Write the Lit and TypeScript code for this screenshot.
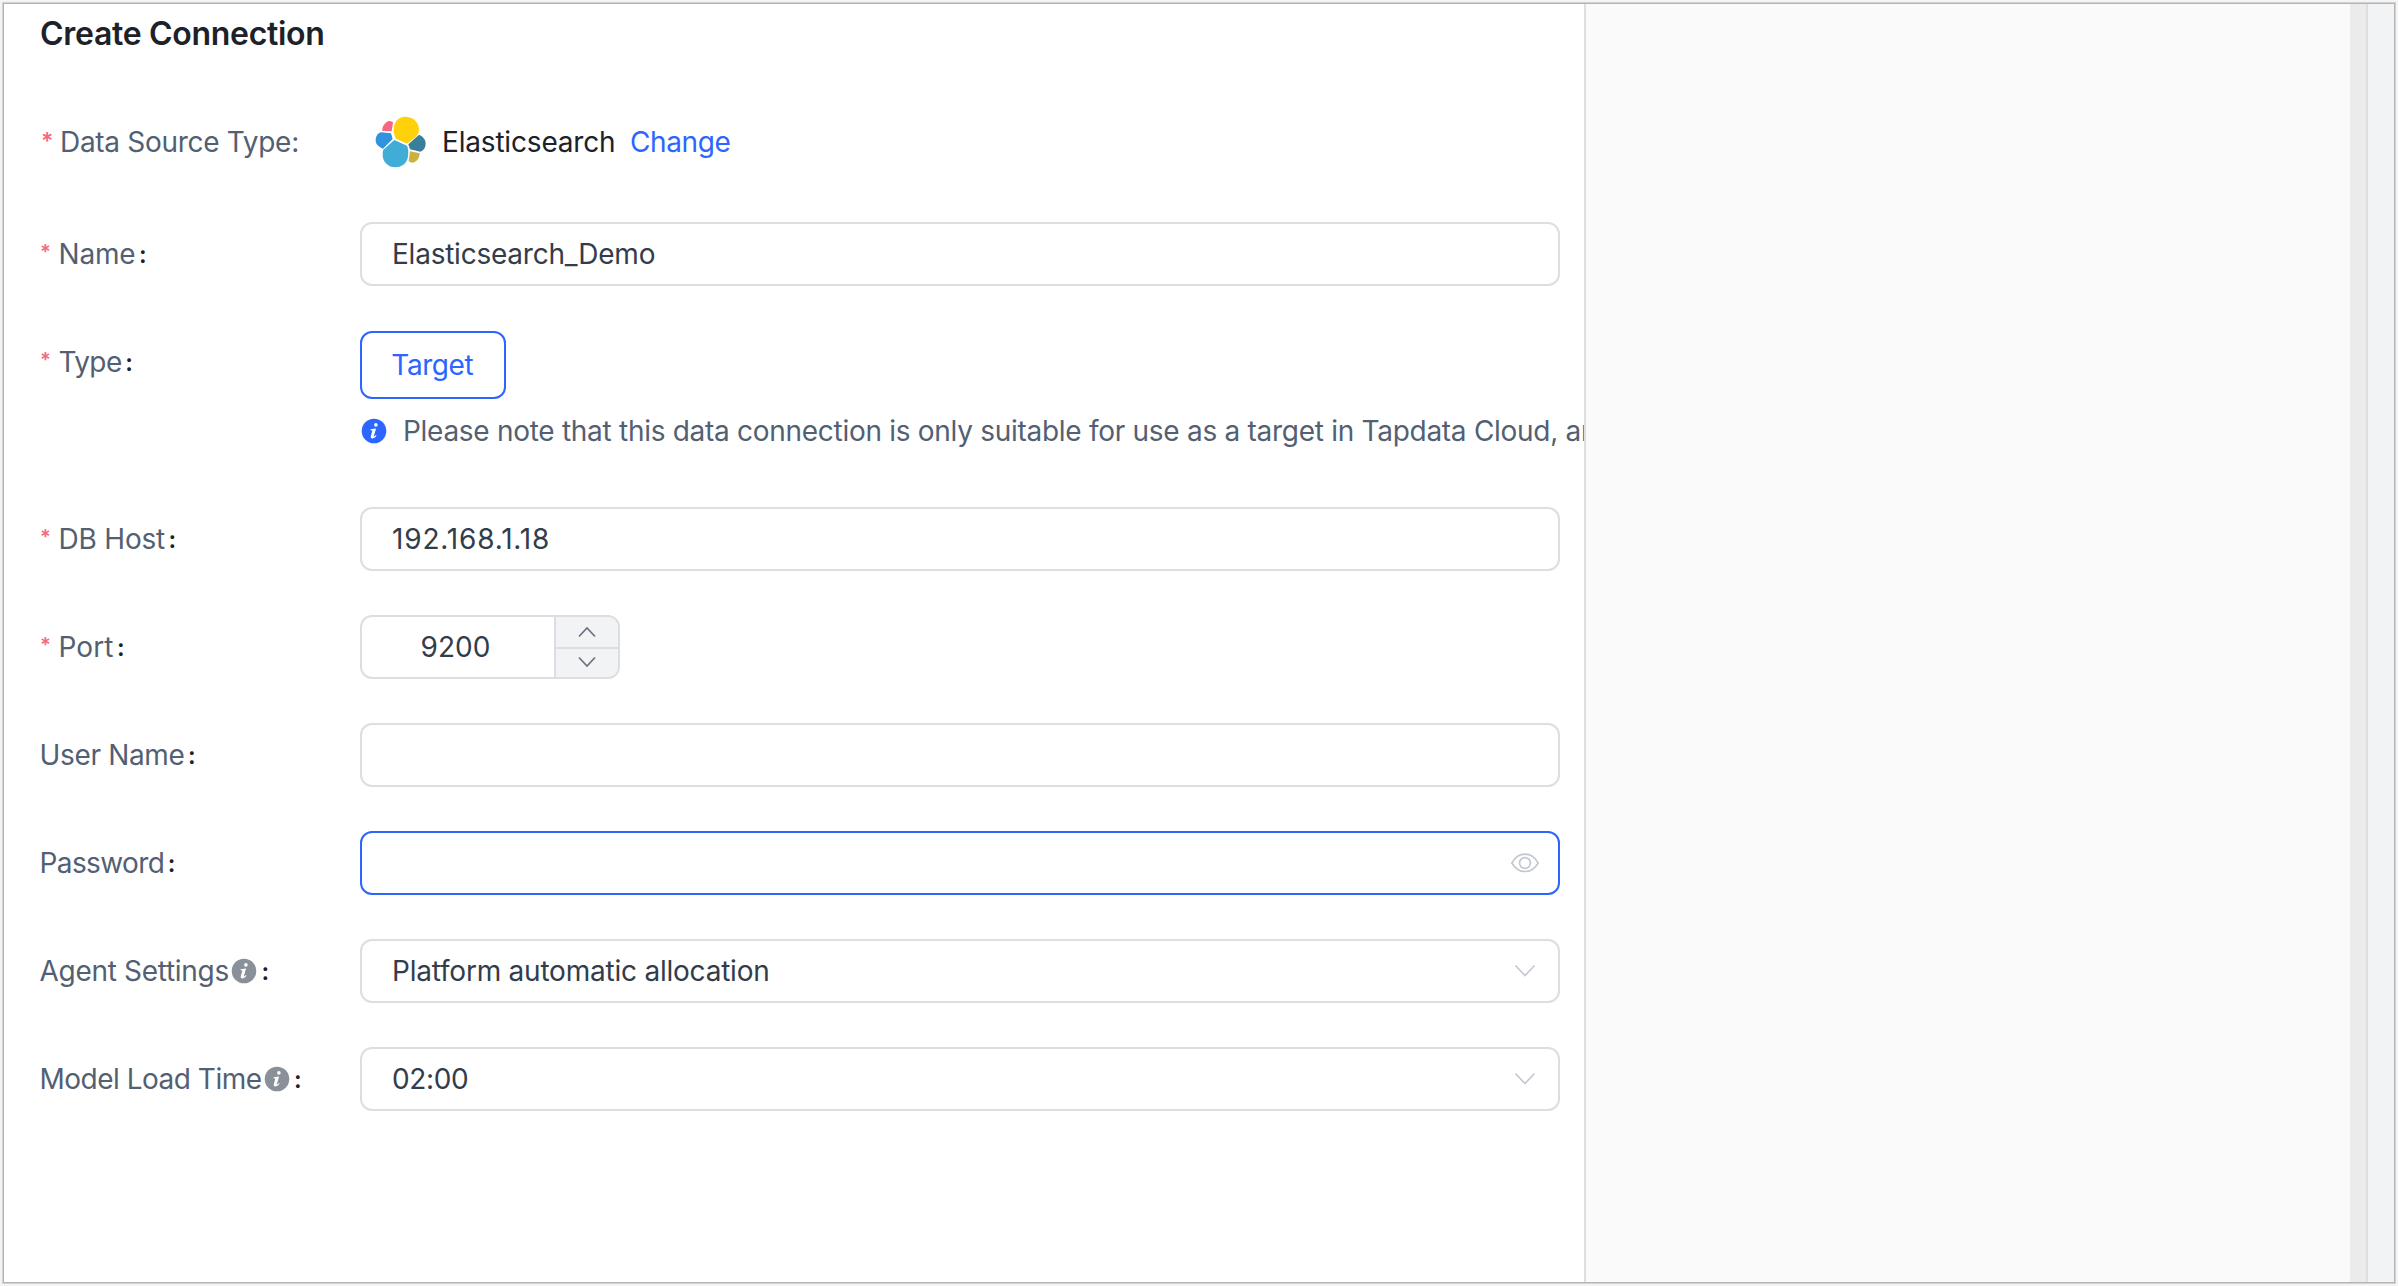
import { LitElement, html, css, svg, nothing } from "lit";
import { customElement, property } from "lit/decorators.js";
import { styleMap } from "lit/directives/style-map.js";

const track = (px: number) => styleMap({ letterSpacing: `${px}px` });

const infoIcon = svg`<svg class="info" viewBox="0 0 26 26">
  <circle cx="13" cy="13" r="12.3" fill="currentColor" />
  <circle cx="14.9" cy="6.9" r="1.8" fill="#fff" />
  <path d="M9.6 11.3L15.1 10.4L12.8 18.3C12.6 19.1 13.2 19 14.8 17.1L15.5 17.7C13.4 20.9 9.3 21.5 9.7 18.5L11.4 12.4L9.5 12.2Z" fill="#fff" />
</svg>`;

const chevronDown = svg`<svg class="chevron" viewBox="0 0 28 28">
  <path d="M4.5 8.5L14 18.5L23.5 8.5" fill="none" stroke="#c3c7d3" stroke-width="1.6" />
</svg>`;

const eyeIcon = svg`<svg class="eye" viewBox="0 0 28 20">
  <path d="M0.8 10C7.5 -1.8 20.5 -1.8 27.2 10C20.5 21.4 7.5 21.4 0.8 10Z" fill="none" stroke="#c3c7d3" stroke-width="1.6" />
  <circle cx="14" cy="10" r="5.4" fill="none" stroke="#c3c7d3" stroke-width="1.6" />
</svg>`;

const elasticLogo = svg`<svg class="logo" viewBox="46 48 153 156">
  <path d="M105 73C112 54 128 49 143 51C163 53 178 70 178 88C178 97 175 104 169 110L142 131L109 116C102 104 100 87 105 73Z" fill="#fed10a" />
  <path d="M71 149L104 120L142 137C147 147 147 160 144 175C138 194 124 202 107 202C86 202 69 186 69 165C69 159 69 154 71 149Z" fill="#40add6" />
  <path d="M68 93C67 80 74 69 87 63C91 62 96 64 100 67L96 94Z" fill="#f7677f" />
  <path d="M65 97L94 100L99 117L70 146C55 141 48 131 48 121C48 109 54 99 65 97Z" fill="#2f93e0" />
  <path d="M178 104C190 109 198 119 198 131C198 142 192 151 182 155L151 148L146 133Z" fill="#3b7e9c" />
  <path d="M151 154L180 160C180 173 172 186 159 188C154 188 150 186 147 183Z" fill="#cdb13f" />
</svg>`;

@customElement("form-row")
class FormRow extends LitElement {
  @property() label = "";
  @property({ type: Boolean }) required = false;
  @property({ type: Boolean }) tip = false;
  @property({ type: Number }) track = 0;

  static styles = css`
    :host {
      display: grid;
      grid-template-columns: 320px 1200px;
      align-items: start;
      margin-bottom: 44px;
    }
    .label {
      display: flex;
      align-items: center;
      height: 64px;
      color: #535f72;
      white-space: nowrap;
    }
    .star {
      width: 18.5px;
      height: 36px;
      box-sizing: border-box;
      font-size: 20px;
      font-weight: 600;
      line-height: 32px;
      color: #f7677f;
    }
    .text {
      margin-left: -0.5px;
    }
    .required .text {
      margin-left: 0;
    }
    .info {
      width: 26px;
      height: 26px;
      color: #8a9099;
      margin-left: 2px;
      margin-top: -1px;
    }
    .colon {
      margin-left: 3.5px;
      font-size: 24px;
      font-weight: 600;
      color: #1d2129;
      line-height: 28px;
      padding-top: 1px;
    }
    .info + .colon {
      margin-left: 4.5px;
    }
  `;

  render() {
    return html`
      <div class="label ${this.required ? "required" : ""}">
        ${this.required ? html`<span class="star">*</span>` : nothing}
        <span class="text" style=${track(this.track)}>${this.label}</span>
        ${this.tip ? infoIcon : nothing}
        <span class="colon">:</span>
      </div>
      <slot></slot>
    `;
  }
}

@customElement("app-root")
class AppRoot extends LitElement {
  static styles = css`
    :host {
      display: block;
      box-sizing: border-box;
      width: 2398px;
      height: 1286px;
      padding: 4px;
      background: #f4f4f4;
      font: 28px/34px Inter, "Liberation Sans", sans-serif;
      overflow: hidden;
    }
    .window {
      display: flex;
      width: 2390px;
      height: 1278px;
      background: #fff;
      box-shadow: 0 0 0 1px #b4b4b4, 0 0 0 2px #d2d2d2;
    }
    .main {
      box-sizing: border-box;
      width: 1582px;
      border-right: 2px solid #dddde4;
      padding-left: 36px;
      overflow: hidden;
      flex: none;
    }
    .doc {
      width: 764px;
      background: #fafafa;
    }
    .scroll {
      width: 16px;
      background: #ebebeb;
      border-right: 2px solid #dddde4;
    }
    .edge {
      flex: 1;
      background: #f2f3f5;
    }
    h1 {
      margin: 0;
      padding-top: 10px;
      font-size: 32px;
      line-height: 40px;
      font-weight: 600;
      color: #1d2129;
    }
    .source {
      display: flex;
      align-items: center;
      height: 64px;
      margin: 56px 0 48px;
      white-space: nowrap;
    }
    .source .label {
      width: 320px;
      display: flex;
      color: #535f72;
    }
    .source .star {
      width: 20px;
      font-size: 23px;
      font-weight: 600;
      line-height: 32px;
      padding-left: 1px;
      box-sizing: border-box;
      color: #f7677f;
    }
    .logo {
      width: 51px;
      height: 52px;
      margin: 0 16px 0 15px;
    }
    .source .name {
      color: #1d2129;
      margin-right: 14.5px;
    }
    .link {
      color: #2c65ff;
    }
    .input {
      box-sizing: border-box;
      display: flex;
      align-items: center;
      justify-content: space-between;
      width: 1200px;
      height: 64px;
      border: 2px solid #dddde4;
      border-radius: 12px;
      padding: 0 19px 0 30px;
      color: #333c4a;
    }
    .input.focus {
      border-color: #2c65ff;
    }
    .chevron {
      width: 28px;
      height: 28px;
    }
    .eye {
      width: 28px;
      height: 20px;
      margin-top: -1px;
    }
    .type {
      display: flex;
      flex-direction: column;
      align-items: flex-start;
      height: 133px;
      padding-top: 1px;
      box-sizing: border-box;
    }
    .target {
      box-sizing: border-box;
      display: flex;
      align-items: center;
      justify-content: center;
      width: 146px;
      height: 68px;
      padding-right: 1.5px;
      border: 2px solid #2c65ff;
      border-radius: 12px;
      color: #2c65ff;
    }
    .note {
      display: flex;
      align-items: center;
      gap: 16px;
      padding-left: 1px;
      margin-top: 15px;
      color: #535f72;
      white-space: nowrap;
    }
    .note .info {
      flex: none;
      width: 26px;
      height: 26px;
      margin-top: -1px;
      color: #2c65ff;
    }
    .number {
      box-sizing: border-box;
      display: grid;
      grid-template-columns: 192px 64px;
      width: 260px;
      height: 64px;
      border: 2px solid #dddde4;
      border-radius: 12px;
      overflow: hidden;
      color: #333c4a;
    }
    .number .value {
      display: flex;
      align-items: center;
      justify-content: center;
      padding-right: 5px;
    }
    .steps {
      display: grid;
      grid-template-rows: 30px 28px;
      gap: 2px;
      border-left: 2px solid #dddde4;
      background: #dddde4;
    }
    .step {
      display: flex;
      align-items: center;
      justify-content: center;
      background: #f2f3f5;
    }
    .step svg {
      width: 20px;
      height: 12px;
    }
    .step.down svg {
      margin-bottom: 3px;
    }
  `;

  render() {
    return html`
      <div class="window">
        <div class="main">
          <h1 style=${track(-0.3)}>Create Connection</h1>
          <div class="source">
            <div class="label">
              <span class="star">*</span>
              <span style=${track(-0.3)}>Data Source Type:</span>
            </div>
            ${elasticLogo}
            <span class="name" style=${track(-0.18)}>Elasticsearch</span>
            <span class="link" style=${track(-0.4)}>Change</span>
          </div>
          <form-row label="Name" track="-0.2" required>
            <div class="input"><span style=${track(-0.23)}>Elasticsearch_Demo</span></div>
          </form-row>
          <form-row label="Type" track="-0.6" required>
            <div class="type">
              <div class="target"><span style=${track(-0.45)}>Target</span></div>
              <div class="note">
                ${infoIcon}
                <span style=${track(-0.285)}>Please note that this data connection is only suitable for use as a target in Tapdata Cloud, and</span>
              </div>
            </div>
          </form-row>
          <form-row label="DB Host" track="-0.2" required>
            <div class="input"><span style=${track(0.82)}>192.168.1.18</span></div>
          </form-row>
          <form-row label="Port" track="0.07" required>
            <div class="number">
              <div class="value">9200</div>
              <div class="steps">
                <div class="step">
                  <svg viewBox="0 0 20 12"><path d="M2 10.5L10 2L18 10.5" fill="none" stroke="#6a7280" stroke-width="1.7" /></svg>
                </div>
                <div class="step down">
                  <svg viewBox="0 0 20 12"><path d="M2 1.5L10 10L18 1.5" fill="none" stroke="#6a7280" stroke-width="1.7" /></svg>
                </div>
              </div>
            </div>
          </form-row>
          <form-row label="User Name" track="-0.34"><div class="input"></div></form-row>
          <form-row label="Password" track="-0.6">
            <div class="input focus"><span></span>${eyeIcon}</div>
          </form-row>
          <form-row label="Agent Settings" track="-0.3" tip>
            <div class="input"><span style=${track(-0.22)}>Platform automatic allocation</span>${chevronDown}</div>
          </form-row>
          <form-row label="Model Load Time" track="-0.5" tip>
            <div class="input"><span style=${track(-0.37)}>02:00</span>${chevronDown}</div>
          </form-row>
        </div>
        <div class="doc"></div>
        <div class="scroll"></div>
        <div class="edge"></div>
      </div>
    `;
  }
}
